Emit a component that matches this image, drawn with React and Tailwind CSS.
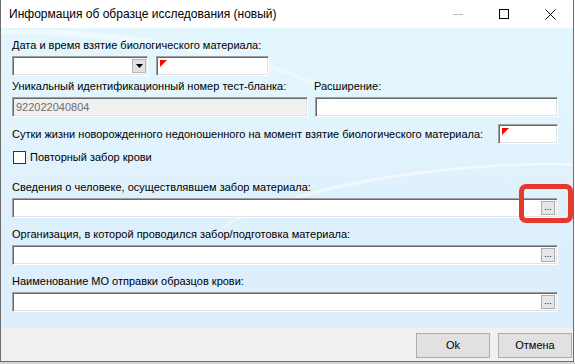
import React from "react";

const FONT = { fontFamily: '"Liberation Sans", Arial, sans-serif' };

function Sunken({ className = "", disabled = false, children }) {
  return (
    <div
      className={`relative box-border border border-t-[#a0a0a0] border-l-[#a0a0a0] border-b-white border-r-white shadow-[inset_1px_1px_0_#696969,inset_-1px_-1px_0_#e3e3e3] ${
        disabled ? "bg-[#f0f0f0]" : "bg-white"
      } ${className}`}
    >
      {children}
    </div>
  );
}

function RedCorner() {
  return (
    <svg className="absolute left-[3px] top-[3px]" width="7" height="7" viewBox="0 0 7 7">
      <polygon points="0,0 7,0 0,7" fill="#ff0000" />
    </svg>
  );
}

function Ellipsis() {
  return (
    <div className="absolute right-[2px] top-[2px] w-[14px] h-[14px] box-border border border-[#adadad] bg-[#e6e6e6] flex items-end justify-center">
      <span className="text-[9px] leading-[9px] pb-[2px] text-black">...</span>
    </div>
  );
}

function Label({ children, className = "" }) {
  return <div className={`h-[13px] text-[11px] leading-[13px] text-black whitespace-nowrap ${className}`}>{children}</div>;
}

export default function App() {
  return (
    <div className="w-[575px] h-[364px] overflow-hidden bg-white relative" style={FONT}>
      <div className="w-[574px] h-[362px] box-border border-l border-r border-b border-[#6e6e6e] flex flex-col">
        {/* Title bar */}
        <div className="h-[28px] bg-white flex items-center shrink-0">
          <div className="pl-[8px] text-[12px] text-black flex-1 whitespace-nowrap">Информация об образце исследования (новый)</div>
          <div className="w-[46px] h-full flex items-center justify-center">
            <div className="w-[10px] h-px bg-[#bdbdbd]" />
          </div>
          <div className="w-[46px] h-full flex items-center justify-center">
            <div className="w-[10px] h-[10px] border border-black" />
          </div>
          <div className="w-[46px] h-full flex items-center justify-center">
            <svg width="11" height="11" viewBox="0 0 11 11">
              <path d="M0.5 0.5 L10.5 10.5 M10.5 0.5 L0.5 10.5" stroke="#000" strokeWidth="1" />
            </svg>
          </div>
        </div>

        {/* Body */}
        <div className="h-[300px] shrink-0 bg-gradient-to-b from-[#e4f6fd] to-[#dcedfc] pl-[11px] pr-[15px] flex flex-col relative overflow-hidden">
          <div className="absolute -left-[60px] top-[10px] w-[400px] h-[80px] rounded-[50%] border-t-[6px] border-white/40 rotate-[8deg]" />
          <div className="absolute left-[200px] top-[140px] w-[500px] h-[120px] rounded-[50%] border-t-[3px] border-white/50 -rotate-[6deg]" />

          <Label className="mt-[11px] relative">Дата и время взятие биологического материала:</Label>
          <div className="mt-[4px] flex gap-[8px] relative">
            <Sunken className="w-[136px] h-[20px]">
              <div className="absolute right-[1px] top-[2px] w-[14px] h-[14px] box-border border border-[#b5b5b5] bg-[#e1e1e1] flex items-center justify-center">
                <svg width="7" height="4" viewBox="0 0 7 4">
                  <polygon points="0,0 7,0 3.5,4" fill="#000" />
                </svg>
              </div>
            </Sunken>
            <Sunken className="w-[113px] h-[20px]">
              <RedCorner />
            </Sunken>
          </div>

          <div className="mt-[4px] flex relative">
            <Label className="w-[302px]">Уникальный идентификационный номер тест-бланка:</Label>
            <Label>Расширение:</Label>
          </div>
          <div className="mt-[4px] flex gap-[7px] relative">
            <Sunken disabled className="w-[296px] h-[20px] flex items-center pl-[3px]">
              <span className="text-[11px] text-[#6d6d6d]">922022040804</span>
            </Sunken>
            <Sunken className="w-[243px] h-[20px]" />
          </div>

          <div className="mt-[7px] flex items-center relative">
            <Label className="flex-1">Сутки жизни новорожденного недоношенного на момент взятие биологического материала:</Label>
            <Sunken className="w-[60px] h-[20px]">
              <RedCorner />
            </Sunken>
          </div>

          <div className="mt-[7px] flex items-center gap-[4px] pl-[1px] relative">
            <div className="w-[13px] h-[13px] box-border border border-[#333] bg-white" />
            <Label>Повторный забор крови</Label>
          </div>

          <Label className="mt-[17px] relative">Сведения о человеке, осуществлявшем забор материала:</Label>
          <Sunken className="mt-[4px] h-[20px]">
            <Ellipsis />
          </Sunken>

          <Label className="mt-[10px] relative">Организация, в которой проводился забор/подготовка материала:</Label>
          <Sunken className="mt-[4px] h-[20px]">
            <Ellipsis />
          </Sunken>

          <Label className="mt-[10px] relative">Наименование МО отправки образцов крови:</Label>
          <Sunken className="mt-[4px] h-[20px]">
            <Ellipsis />
          </Sunken>
        </div>

        {/* Footer */}
        <div className="flex-1 bg-[#f0f0f0] flex justify-end items-start pt-[5px] pr-[1px] gap-[8px]">
          <div className="w-[74px] h-[25px] box-border border border-[#adadad] bg-[#e1e1e1] flex items-center justify-center text-[11px] text-black">Ok</div>
          <div className="w-[74px] h-[25px] box-border border border-[#adadad] bg-[#e1e1e1] flex items-center justify-center text-[11px] text-black">Отмена</div>
        </div>
      </div>
      <div className="h-[2px] w-full bg-[#d4d4d4]" />

      {/* Highlight */}
      <div className="absolute left-[519px] top-[184px] w-[54px] h-[39px] rounded-[7px] border-[5px] border-[#e5392e]" />
    </div>
  );
}
